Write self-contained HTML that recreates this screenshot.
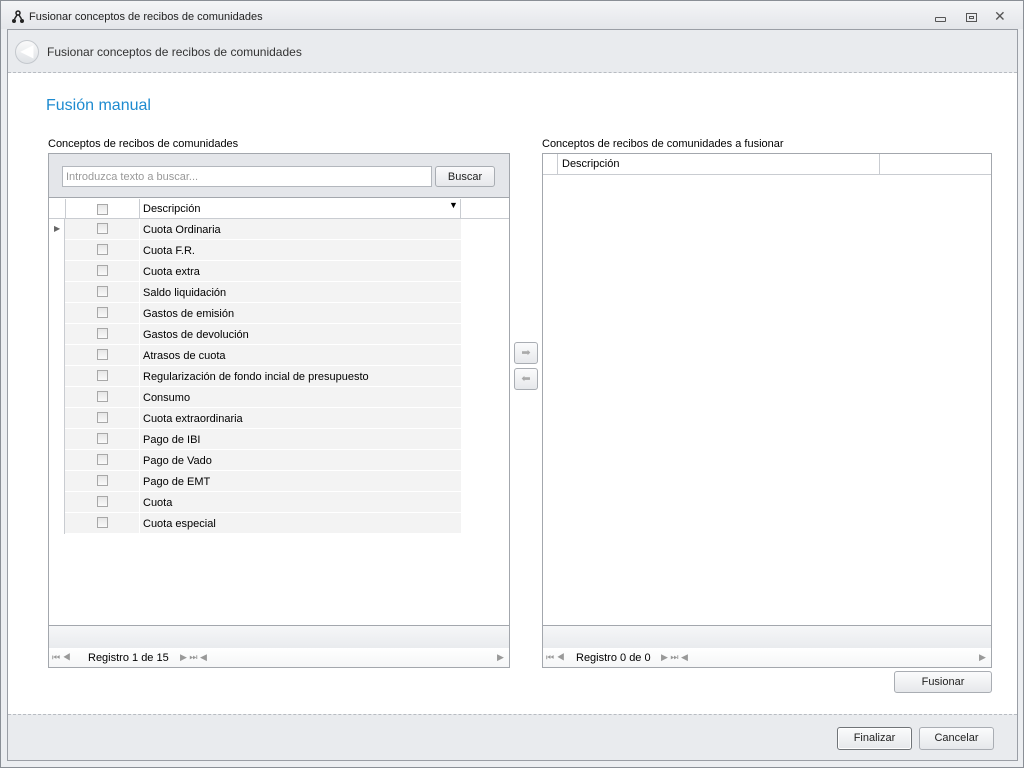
<!DOCTYPE html><html><head><meta charset="utf-8"><style>
*{box-sizing:border-box;margin:0;padding:0}
body{width:1024px;height:768px;position:relative;background:#fff;font-family:"Liberation Sans",sans-serif;font-size:11px;color:#000;overflow:hidden}
.a{position:absolute}
.win{left:0;top:0;width:1024px;height:768px;border:1px solid #8a8f96;background:#eceef1}
.row{position:absolute;left:0;height:21px;width:412px;border-bottom:1px solid #fff}
.cb{position:absolute;width:11px;height:11px;border:1px solid #a8a8a8;background:linear-gradient(#e6e6e6,#fafafa)}
.btn{position:absolute;border:1px solid #a9adb3;border-radius:3px;background:linear-gradient(#fbfbfc,#e6e8eb);text-align:center;font-size:11px;line-height:20px;color:#222}
.nav{color:#999;font-size:9px}
</style></head><body>
<div class="a win"></div>
<div class="a" style="left:1px;top:1px;width:1022px;height:28px;background:linear-gradient(#f4f5f7,#e4e6ea)"></div>
<svg class="a" style="left:11px;top:10px" width="14" height="14" viewBox="0 0 14 14"><circle cx="7" cy="3" r="2" fill="none" stroke="#222" stroke-width="1.5"/><circle cx="3" cy="11" r="2" fill="#222"/><circle cx="11" cy="11" r="2" fill="#222"/><path d="M6 5L3.5 9M8 5l2.5 4" stroke="#222" stroke-width="1.5"/></svg>
<div class="a" style="left:29px;top:11px;font-size:11px;color:#222">Fusionar conceptos de recibos de comunidades</div>
<div class="a" style="left:935px;top:17px;width:11px;height:5px;border:1px solid #555;border-radius:1px"></div>
<div class="a" style="left:966px;top:13px;width:11px;height:9px;border:1px solid #555"><div class="a" style="left:2px;top:2px;width:5px;height:3px;border:1px solid #555"></div></div>
<div class="a" style="left:994px;top:8px;font-size:14px;color:#555">✕</div>
<div class="a" style="left:7px;top:29px;width:1011px;height:732px;border:1px solid #9a9ea5;background:#fff"></div>
<div class="a" style="left:8px;top:30px;width:1009px;height:43px;background:#e9ebee;border-bottom:1px dashed #b8bcc2"></div>
<div class="a" style="left:15px;top:40px;width:24px;height:24px;border-radius:50%;border:1px solid #c4c8cd;background:linear-gradient(#fafafa,#dfe2e6);color:#fff;font-size:16px;text-align:center;line-height:21px;font-weight:bold">&#9664;</div>
<div class="a" style="left:47px;top:45px;font-size:12px;color:#333">Fusionar conceptos de recibos de comunidades</div>
<div class="a" style="left:46px;top:97px;font-size:16px;color:#1e8bd0">Fusión manual</div>
<div class="a" style="left:48px;top:138px">Conceptos de recibos de comunidades</div>
<div class="a" style="left:542px;top:138px">Conceptos de recibos de comunidades a fusionar</div>

<div class="a" style="left:48px;top:153px;width:462px;height:515px;border:1px solid #a3a7ad;background:#fff">
 <div class="a" style="left:0;top:0;width:460px;height:44px;background:#e4e6ea;border-bottom:1px solid #a3a7ad"></div>
 <div class="a" style="left:13px;top:12px;width:370px;height:21px;border:1px solid #b3b7bd;background:#fff;color:#999;padding:4px 0 0 3px">Introduzca texto a buscar...</div>
 <div class="btn" style="left:386px;top:12px;width:60px;height:21px">Buscar</div>
 <div class="a" style="left:0;top:45px;width:460px;height:20px;background:#fff;border-bottom:1px solid #c9ccd1"></div>
 <div class="a" style="left:16px;top:45px;width:1px;height:335px;background:#c9ccd1"></div>
 <div class="a" style="left:90px;top:45px;width:1px;height:20px;background:#c9ccd1"></div>
 <div class="a" style="left:411px;top:45px;width:1px;height:20px;background:#c9ccd1"></div>
 <div class="cb" style="left:48px;top:50px"></div>
 <div class="a" style="left:94px;top:49px">Descripción</div>
 <div class="a" style="left:400px;top:46px;font-size:9px">▼</div>
 <div id="rows" class="a" style="left:0;top:65px;width:412px"></div>
 <div class="a" style="left:0;top:471px;width:460px;height:23px;border-top:1px solid #a3a7ad;background:linear-gradient(#f6f7f8,#e9ebee)"></div>
 <div class="a" style="left:0;top:494px;width:460px;height:19px;background:linear-gradient(#fff,#f5f6f7)"></div>
 <div class="a nav" style="left:3px;top:498px">⏮ ◀</div>
 <div class="a" style="left:39px;top:498px">Registro 1 de 15</div>
 <div class="a nav" style="left:131px;top:498px">▶ ⏭ ◀</div>
 <div class="a nav" style="left:448px;top:498px">▶</div>
</div>

<div class="btn" style="left:514px;top:342px;width:24px;height:22px;color:#aaa;line-height:20px">➡</div>
<div class="btn" style="left:514px;top:368px;width:24px;height:22px;color:#aaa;line-height:20px">⬅</div>

<div class="a" style="left:542px;top:153px;width:450px;height:515px;border:1px solid #a3a7ad;background:#fff">
 <div class="a" style="left:0;top:0;width:448px;height:21px;border-bottom:1px solid #c9ccd1"></div>
 <div class="a" style="left:14px;top:0;width:1px;height:20px;background:#c9ccd1"></div>
 <div class="a" style="left:336px;top:0;width:1px;height:20px;background:#c9ccd1"></div>
 <div class="a" style="left:19px;top:4px">Descripción</div>
 <div class="a" style="left:0;top:471px;width:448px;height:23px;border-top:1px solid #a3a7ad;background:linear-gradient(#f6f7f8,#e9ebee)"></div>
 <div class="a" style="left:0;top:494px;width:448px;height:19px;background:linear-gradient(#fff,#f5f6f7)"></div>
 <div class="a nav" style="left:3px;top:498px">⏮ ◀</div>
 <div class="a" style="left:33px;top:498px">Registro 0 de 0</div>
 <div class="a nav" style="left:118px;top:498px">▶ ⏭ ◀</div>
 <div class="a nav" style="left:436px;top:498px">▶</div>
</div>
<div class="btn" style="left:894px;top:671px;width:98px;height:22px">Fusionar</div>

<div class="a" style="left:8px;top:714px;width:1009px;height:46px;background:#e9ebee;border-top:1px dashed #b8bcc2"></div>
<div class="btn" style="left:837px;top:727px;width:75px;height:23px;box-shadow:inset 0 0 0 1px #fff;border:1px solid #707478">Finalizar</div>
<div class="btn" style="left:919px;top:727px;width:75px;height:23px">Cancelar</div>
<script>
var n=["Cuota Ordinaria","Cuota F.R.","Cuota extra","Saldo liquidación","Gastos de emisión","Gastos de devolución","Atrasos de cuota","Regularización de fondo incial de presupuesto","Consumo","Cuota extraordinaria","Pago de IBI","Pago de Vado","Pago de EMT","Cuota","Cuota especial"],h="";
n.forEach(function(t,i){h+='<div class="row" style="top:'+(i*21)+'px;background:#f3f3f3"><div class="a" style="left:0;top:0;width:16px;height:21px;background:#fff;border-right:1px solid #c9ccd1"></div>'+(i==0?'<div class="a" style="left:5px;top:5px;font-size:8px;color:#666">▶</div>':'')+'<div class="cb" style="left:48px;top:4px"></div><div class="a" style="left:90px;top:0;width:1px;height:21px;background:#fff"></div><div class="a" style="left:94px;top:5px">'+t+'</div></div>'});
document.getElementById("rows").innerHTML=h;
</script>
</body></html>
